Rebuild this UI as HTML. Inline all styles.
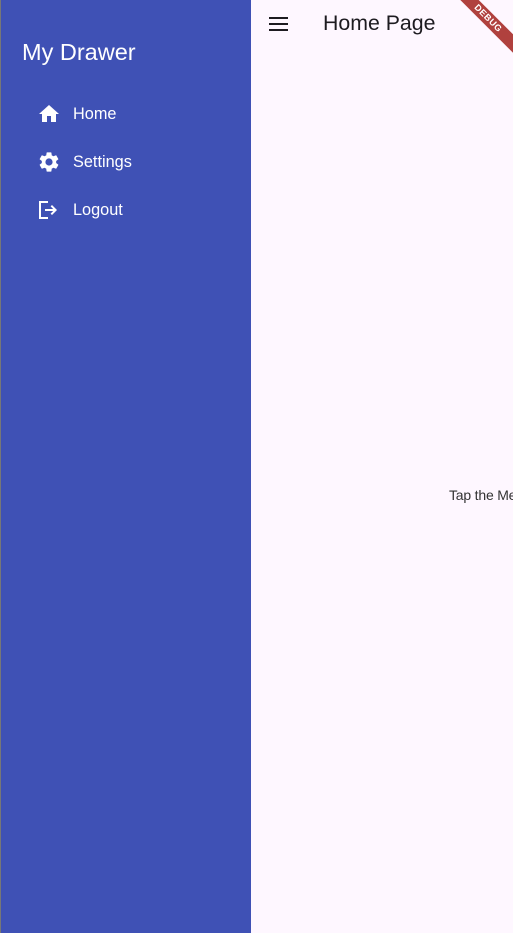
<!DOCTYPE html>
<html><head><meta charset="utf-8"><style>
*{margin:0;padding:0;box-sizing:border-box}
body{width:513px;height:933px;overflow:hidden;background:#fef7ff;font-family:"Liberation Sans",sans-serif;position:relative}
.drawer{position:absolute;left:0;top:0;width:251px;height:933px;background:#3f51b5;border-left:1px solid #777}
.title{position:absolute;left:21px;top:39px;color:#fff;font-size:23.5px}
.item{position:absolute;left:36px;color:#fff;font-size:16.3px;display:flex;align-items:center}
.item svg{width:24px;height:24px;fill:#fff;margin-right:12px}
.bar{position:absolute;left:268px;top:14px}
.ht{position:absolute;left:323px;top:11px;font-size:21.3px;color:#1d1b20}
.tap{position:absolute;left:449px;top:487px;font-size:14px;color:#333;white-space:nowrap;letter-spacing:-.2px}
.debug{position:absolute;right:-30px;top:12px;width:110px;height:13px;background:#b0413e;transform:rotate(45deg);color:#fff;font-size:9px;font-weight:bold;text-align:center;line-height:13px;letter-spacing:.5px}
</style></head><body>
<div class="drawer">
<div class="title">My Drawer</div>
<div class="item" style="top:102px"><svg viewBox="0 0 24 24"><path d="M10 20v-6h4v6h5v-8h3L12 3 2 12h3v8z"/></svg>Home</div>
<div class="item" style="top:150px"><svg viewBox="0 0 24 24"><path d="M19.14 12.94c.04-.3.06-.61.06-.94s-.02-.64-.07-.94l2.030-1.58a.49.49 0 00.12-.61l-1.92-3.32a.49.49 0 00-.59-.22l-2.39.96c-.5-.38-1.03-.7-1.62-.94l-.36-2.54a.48.48 0 00-.48-.41h-3.84c-.24 0-.43.17-.47.41l-.36 2.54c-.59.24-1.130.57-1.62.94l-2.39-.96a.49.49 0 00-.59.22L2.74 8.87c-.12.21-.08.47.12.61l2.03 1.58c-.05.3-.09.63-.09.94s.02.64.07.94l-2.03 1.58a.49.49 0 00-.12.61l1.92 3.32c.12.22.37.29.59.22l2.39-.96c.5.38 1.03.7 1.62.94l.36 2.54c.05.24.24.41.48.41h3.84c.24 0 .44-.17.47-.41l.36-2.54c.59-.24 1.13-.56 1.62-.94l2.39.96c.22.08.47 0 .59-.22l1.92-3.32c.12-.22.07-.47-.12-.61l-2.01-1.58zM12 15.6A3.6 3.6 0 1112 8.4a3.6 3.6 0 010 7.2z"/></svg>Settings</div>
<div class="item" style="top:198px"><svg viewBox="0 0 24 24"><path d="M2 3h9v2H4v14h7v2H2zM15 7l-1.4 1.4L16.2 11H8v2h8.2l-2.6 2.6L15 17l5-5z"/></svg>Logout</div>
</div>
<svg class="bar" width="22" height="20" viewBox="0 0 22 20"><path d="M1 4h19M1 10h19M1 16h19" stroke="#1d1b20" stroke-width="2"/></svg>
<div class="ht">Home Page</div>
<div class="tap">Tap the Menu</div>
<div class="debug">DEBUG</div>
</body></html>
